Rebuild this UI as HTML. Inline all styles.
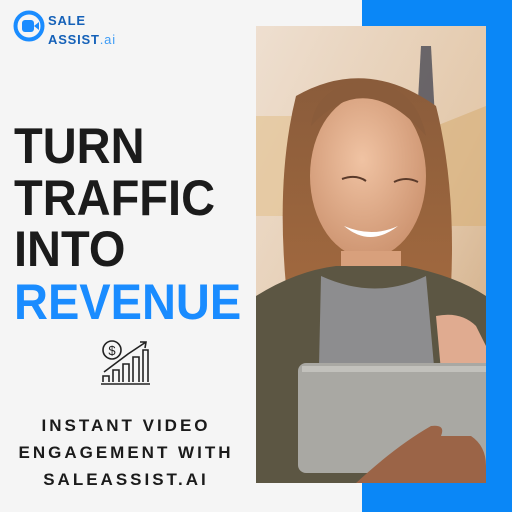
<!DOCTYPE html>
<html><head><style>
body{margin:0;width:512px;height:512px;background:#f5f5f5;position:relative;overflow:hidden;font-family:"Liberation Sans",sans-serif}
.blue{position:absolute;left:362px;top:0;width:150px;height:512px;background:#0a87f7}
.photo{position:absolute;left:256px;top:26px;width:230px;height:457px;overflow:hidden}
.h{position:absolute;left:14px;font-weight:bold;font-size:50px;line-height:50px;color:#1b1b1b;letter-spacing:0;transform:scaleX(0.94);transform-origin:left}
.sub{position:absolute;left:0;width:252px;text-align:center;font-weight:bold;font-size:17px;letter-spacing:3px;color:#1b1b1b}
</style></head><body>
<div class="blue"></div>
<div class="photo">
<svg width="230" height="457" viewBox="0 0 230 457">
<defs>
<linearGradient id="bg" x1="0" y1="0" x2="1" y2="1"><stop offset="0" stop-color="#eedfd0"/><stop offset="0.6" stop-color="#e3c8aa"/><stop offset="1" stop-color="#c9a37a"/></linearGradient>
<radialGradient id="sk" cx="0.45" cy="0.4" r="0.7"><stop offset="0" stop-color="#f0c3a3"/><stop offset="1" stop-color="#c98e6a"/></radialGradient>
<linearGradient id="hr" x1="0" y1="0" x2="0" y2="1"><stop offset="0" stop-color="#8a5c3b"/><stop offset="1" stop-color="#a0683e"/></linearGradient>
</defs>
<rect width="230" height="457" fill="url(#bg)"/>
<rect x="0" y="90" width="40" height="100" fill="#e2c190" opacity="0.6"/>
<path d="M165 20 L175 20 L180 110 L160 110Z" fill="#4a4a55" opacity="0.8"/>
<path d="M180 100 L230 80 L230 200 L180 200Z" fill="#d8b27e" opacity="0.7"/>
<path d="M40 70 Q110 30 180 80 Q200 160 195 260 L30 260 Q20 150 40 70Z" fill="url(#hr)"/>
<ellipse cx="112" cy="150" rx="58" ry="82" fill="url(#sk)"/>
<path d="M55 100 Q110 40 170 110 Q160 60 110 55 Q60 60 55 100Z" fill="#8a5c3b"/>
<path d="M88 200 Q114 222 142 200 Q116 212 88 200Z" fill="#fff"/>
<path d="M86 153 Q100 148 110 155 M138 156 Q150 150 162 156" stroke="#5a3a2a" stroke-width="2" fill="none"/>
<rect x="85" y="225" width="60" height="40" fill="#d8a07c"/>
<path d="M0 270 Q40 245 80 240 L150 240 Q200 250 230 270 L230 457 L0 457Z" fill="#5c5643"/>
<path d="M65 250 Q120 275 170 250 L178 340 L63 340Z" fill="#8d8d8f"/>
<path d="M180 290 Q205 285 220 300 L230 320 L230 340 L185 345Z" fill="#e0ab90"/>
<rect x="42" y="337" width="200" height="110" rx="8" fill="#a9a8a3"/>
<rect x="46" y="340" width="190" height="6" fill="#c2c1bc"/>
<path d="M100 457 Q140 420 175 400 Q190 398 185 410 L215 410 Q230 420 230 440 L230 457Z" fill="#9b6447"/>
</svg>
</div>
<svg style="position:absolute;left:13px;top:10px" width="34" height="34" viewBox="0 0 34 34">
<circle cx="16" cy="16" r="13.5" fill="none" stroke="#1a8cff" stroke-width="4"/>
<rect x="9" y="10" width="12" height="12" rx="3" fill="#1a8cff"/>
<path d="M21 16 L26 12 L26 20Z" fill="#1a8cff"/>
</svg>
<div style="position:absolute;left:48px;top:11px;font-weight:bold;font-size:13px;line-height:19px;color:#1561b8;letter-spacing:0.8px">SALE<br>ASSIST<span style="color:#3f9cf5;font-weight:normal">.ai</span></div>
<div class="h" style="top:121px">TURN</div>
<div class="h" style="top:173px">TRAFFIC</div>
<div class="h" style="top:224px">INTO</div>
<div class="h" style="top:277px;color:#1a8cff">REVENUE</div>
<svg style="position:absolute;left:100px;top:338px" width="52" height="50" viewBox="0 0 52 50" fill="none" stroke="#222" stroke-width="1.6">
<circle cx="12" cy="12" r="9"/>
<text x="12" y="17" font-size="13" text-anchor="middle" fill="#222" stroke="none" font-family="Liberation Sans">$</text>
<path d="M3 44 L3 38 L9 38 L9 44 M13 44 L13 32 L19 32 L19 44 M23 44 L23 26 L29 26 L29 44 M33 44 L33 19 L39 19 L39 44 M43 44 L43 12 L48 12 L48 44 M1 46 L50 46"/>
<path d="M4 34 L28 16 L46 4 M40 4 L46 4 L45 10"/>
</svg>
<div class="sub" style="top:416px">INSTANT VIDEO</div>
<div class="sub" style="top:443px">ENGAGEMENT WITH</div>
<div class="sub" style="top:470px">SALEASSIST.AI</div>
</body></html>
